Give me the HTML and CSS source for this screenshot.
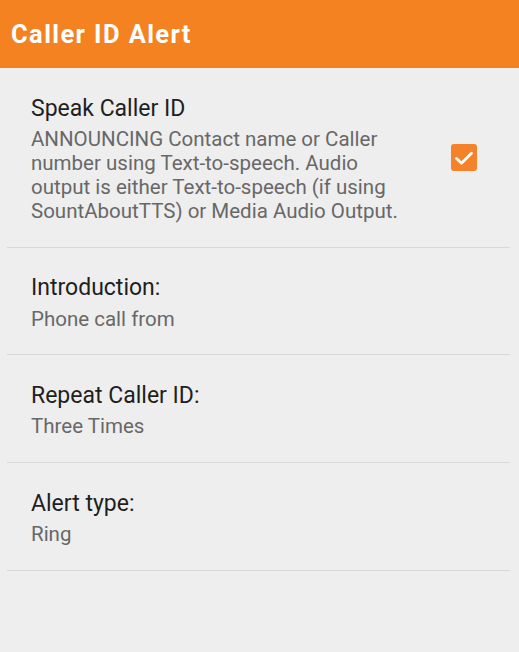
FILE: index.html
```html
<!DOCTYPE html>
<html>
<head>
<meta charset="utf-8">
<link rel="stylesheet" href="styles.css">
</head>
<body>
<header class="appbar"><h1 class="appbar-title">Caller ID Alert</h1></header>
<main class="prefs">
  <div class="pref">
    <div class="pref-text">
      <div class="pref-title">Speak Caller ID</div>
      <div class="pref-summary">ANNOUNCING Contact name or Caller number using Text-to-speech. Audio output is either Text-to-speech (if using SountAboutTTS) or Media Audio Output.</div>
    </div>
    <span class="checkbox"><svg viewBox="0 0 26 27" width="26" height="27"><path d="M5.5 14.5 L10.5 19.3 L20.5 9.3" fill="none" stroke="#fff" stroke-width="2.8" stroke-linecap="round" stroke-linejoin="round"/></svg></span>
  </div>
  <div class="pref">
    <div class="pref-text">
      <div class="pref-title">Introduction:</div>
      <div class="pref-summary">Phone call from</div>
    </div>
  </div>
  <div class="pref">
    <div class="pref-text">
      <div class="pref-title">Repeat Caller ID:</div>
      <div class="pref-summary">Three Times</div>
    </div>
  </div>
  <div class="pref">
    <div class="pref-text">
      <div class="pref-title">Alert type:</div>
      <div class="pref-summary">Ring</div>
    </div>
  </div>
</main>
</body>
</html>
```
FILE: styles.css
```css
html, body {
  margin: 0;
  padding: 0;
  background: #eeeeee;
  font-family: Roboto, "Noto Sans", sans-serif;
  width: 519px;
  height: 652px;
  overflow: hidden;
}
.appbar {
  box-sizing: border-box;
  height: 68px;
  background: #f58220;
  padding: 22px 0 0 11px;
}
.appbar-title {
  margin: 0;
  color: #ffffff;
  font-size: 25.5px;
  line-height: 25px;
  font-weight: 700;
  letter-spacing: 1.4px;
}
.prefs {
  padding: 0 9px 0 7px;
}
.pref {
  display: flex;
  align-items: center;
  border-bottom: 1px solid #d8d8d8;
  padding: 26.5px 0 23.8px 24px;
}
.pref-text {
  width: 375px;
  flex: none;
}
.pref-title {
  font-size: 23px;
  line-height: 28px;
  color: #1f1f1f;
}
.pref-summary {
  font-size: 20.5px;
  line-height: 24px;
  color: #686868;
  margin-top: 4.4px;
}
.checkbox {
  flex: none;
  width: 26px;
  height: 27px;
  margin-left: 45px;
  margin-top: -2px;
  border-radius: 3px;
  background: #f5822a;
  display: block;
}
.checkbox svg { display: block; }
```
